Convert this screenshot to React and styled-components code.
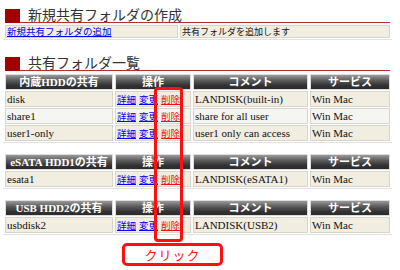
import React from "react";
import styled, { createGlobalStyle } from "styled-components";

const Global = createGlobalStyle`
  * { box-sizing: border-box; }
  body {
    margin: 0;
    background: #fff;
    font-family: "Liberation Serif", "Noto Sans CJK JP", serif;
  }
`;

const Page = styled.div`
  position: relative;
  width: 400px;
  height: 270px;
  padding: 6px 10px 0 5px;
  overflow: hidden;
`;

const Title = styled.h2`
  display: flex;
  align-items: flex-end;
  margin: ${(p) => p.$top || 0}px 0 ${(p) => p.$bottom || 0}px;
  height: 17px;
  font-family: "Noto Sans CJK JP", sans-serif;
  font-weight: normal;
  font-size: 14px;
  color: #333;
`;

const Mark = styled.span`
  width: 15px;
  height: 14px;
  background: #a00000;
  flex: none;
`;

const TitleText = styled.span`
  flex: 1;
  height: 17px;
  padding-left: 8px;
  border-bottom: 1px solid #b03030;
  line-height: 16px;
  white-space: nowrap;
`;

const Table = styled.table`
  table-layout: fixed;
  border-collapse: separate;
  border-spacing: 2px 1px;
  margin: ${(p) => p.$top || 0}px 0 0 -2px;
  width: 389px;
  font-size: 11px;
  box-shadow: 0 1px 0 #e2e2e2;
`;

const Head = styled.th`
  height: 16px;
  padding: 0;
  color: #fff;
  font-weight: bold;
  font-size: 11px;
  font-family: "Liberation Serif", "Noto Sans CJK JP", serif;
  background: linear-gradient(#9a9a9a 0%, #5a5a5a 40%, #333 75%, #2a2a2a 100%);
  border: 1px solid #ddd;
  text-align: center;
  line-height: 14px;
  white-space: nowrap;
`;

const Cell = styled.td`
  height: ${(p) => p.$h || 16}px;
  padding: 0 1px;
  background: ${(p) => (p.$alt ? "#f5f5f2" : "#f1ede1")};
  border: 1px solid #d8d5cc;
  line-height: ${(p) => (p.$h || 16) - 2}px;
  white-space: nowrap;
  overflow: hidden;
  color: #111;
`;

const Link = styled.a`
  color: ${(p) => (p.$red ? "#ee1111" : "#0000ee")};
  text-decoration: underline;
  font-family: "Noto Sans CJK JP", sans-serif;
  font-size: ${(p) => p.$size || 9.5}px;
  margin-right: 3px;
  cursor: pointer;
`;

const Note = styled.span`
  font-family: "Noto Sans CJK JP", sans-serif;
  font-size: 9px;
`;

const Highlight = styled.div`
  position: absolute;
  left: 154px;
  top: 87px;
  width: 29px;
  height: 155px;
  border: 3px solid #ff1010;
  border-radius: 4px;
`;

const Callout = styled.div`
  margin: 9px 0 0 117px;
  width: 101px;
  height: 23px;
  border: 3px solid #ff1010;
  border-radius: 5px;
  color: #ff1010;
  font-family: "Noto Sans CJK JP", sans-serif;
  font-size: 13px;
  line-height: 17px;
  text-align: center;
  letter-spacing: 1px;
  background: #fff;
`;

const groups = [
  {
    name: "内蔵HDDの共有",
    rows: [
      ["disk", "LANDISK(built-in)"],
      ["share1", "share for all user"],
      ["user1-only", "user1 only can access"],
    ],
    top: 2,
  },
  { name: "eSATA HDD1の共有", rows: [["esata1", "LANDISK(eSATA1)"]], top: 11 },
  { name: "USB HDD2の共有", rows: [["usbdisk2", "LANDISK(USB2)"]], top: 11 },
];

function ShareTable({ group }) {
  return (
    <Table $top={group.top}>
      <colgroup>
        <col style={{ width: 108 }} />
        <col style={{ width: 76 }} />
        <col style={{ width: 115 }} />
        <col style={{ width: 80 }} />
      </colgroup>
      <thead>
        <tr>
          <Head>{group.name}</Head>
          <Head>操作</Head>
          <Head>コメント</Head>
          <Head>サービス</Head>
        </tr>
      </thead>
      <tbody>
        {group.rows.map(([name, comment], i) => (
          <tr key={name}>
            <Cell $alt={i % 2 === 1}>{name}</Cell>
            <Cell $alt={i % 2 === 1}>
              <Link>詳細</Link>
              <Link>変更</Link>
              <Link $red>削除</Link>
            </Cell>
            <Cell $alt={i % 2 === 1}>{comment}</Cell>
            <Cell $alt={i % 2 === 1}>Win Mac</Cell>
          </tr>
        ))}
      </tbody>
    </Table>
  );
}

export default function App() {
  return (
    <Page>
      <Global />
      <Title $bottom={1}>
        <Mark />
        <TitleText>新規共有フォルダの作成</TitleText>
      </Title>
      <Table>
        <colgroup>
          <col style={{ width: 173 }} />
          <col />
        </colgroup>
        <tbody>
          <tr>
            <Cell $h={13}>
              <Link $size={9.5}>新規共有フォルダの追加</Link>
            </Cell>
            <Cell $h={13}>
              <Note>共有フォルダを追加します</Note>
            </Cell>
          </tr>
        </tbody>
      </Table>
      <Title $top={15} $bottom={2}>
        <Mark />
        <TitleText>共有フォルダ一覧</TitleText>
      </Title>
      {groups.map((g) => (
        <ShareTable key={g.name} group={g} />
      ))}
      <Callout>クリック</Callout>
      <Highlight />
    </Page>
  );
}
